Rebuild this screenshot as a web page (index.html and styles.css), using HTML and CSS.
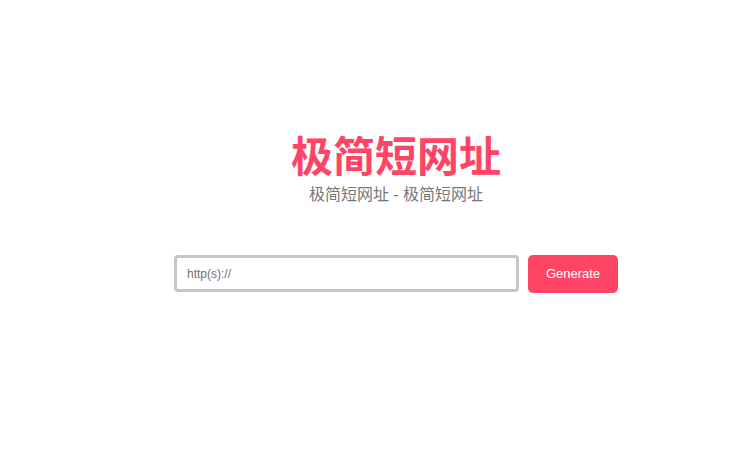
FILE: index.html
```html
<!DOCTYPE html>
<html lang="zh-CN">
<head>
<meta charset="utf-8">
<title>极简短网址</title>
<link rel="stylesheet" href="styles.css">
</head>
<body>
<main class="page">
  <header class="hero">
    <h1 class="title">极简短网址</h1>
    <p class="subtitle">极简短网址 - 极简短网址</p>
  </header>
  <form class="shorten">
    <input class="url-input" type="text" placeholder="http(s)://">
    <button class="generate" type="button">Generate</button>
  </form>
</main>
</body>
</html>
```
FILE: styles.css
```css
html, body {
  margin: 0;
  padding: 0;
  background: #ffffff;
}
body {
  font-family: "Liberation Sans", Arial, "Noto Sans CJK SC", sans-serif;
}
.page {
  width: 444px;
  margin-left: 174px;
  padding-top: 128px;
}
.hero {
  text-align: center;
}
.title {
  margin: 0;
  font-family: "Noto Sans CJK SC", sans-serif;
  font-size: 42px;
  font-weight: 700;
  line-height: 52px;
  color: #ff4466;
}
.subtitle {
  margin: 3px 0 0;
  font-family: "Liberation Sans", "Noto Sans CJK SC", sans-serif;
  font-size: 16px;
  line-height: 24px;
  color: #777777;
}
.shorten {
  display: flex;
  gap: 9px;
  margin-top: 48px;
}
.url-input {
  box-sizing: border-box;
  width: 345px;
  height: 37px;
  border: 3px solid #c3c7ca;
  border-radius: 4px;
  padding: 0 10px;
  font-family: "Liberation Sans", Arial, sans-serif;
  font-size: 12px;
  color: #333;
  outline: none;
}
.url-input::placeholder {
  color: #6f6f6f;
}
.generate {
  box-sizing: border-box;
  width: 90px;
  height: 38px;
  padding: 0 0 2px;
  border: none;
  border-radius: 5px;
  background: #ff4466;
  color: #ffffff;
  font-family: "Liberation Sans", Arial, sans-serif;
  font-size: 13px;
  cursor: pointer;
}
```
